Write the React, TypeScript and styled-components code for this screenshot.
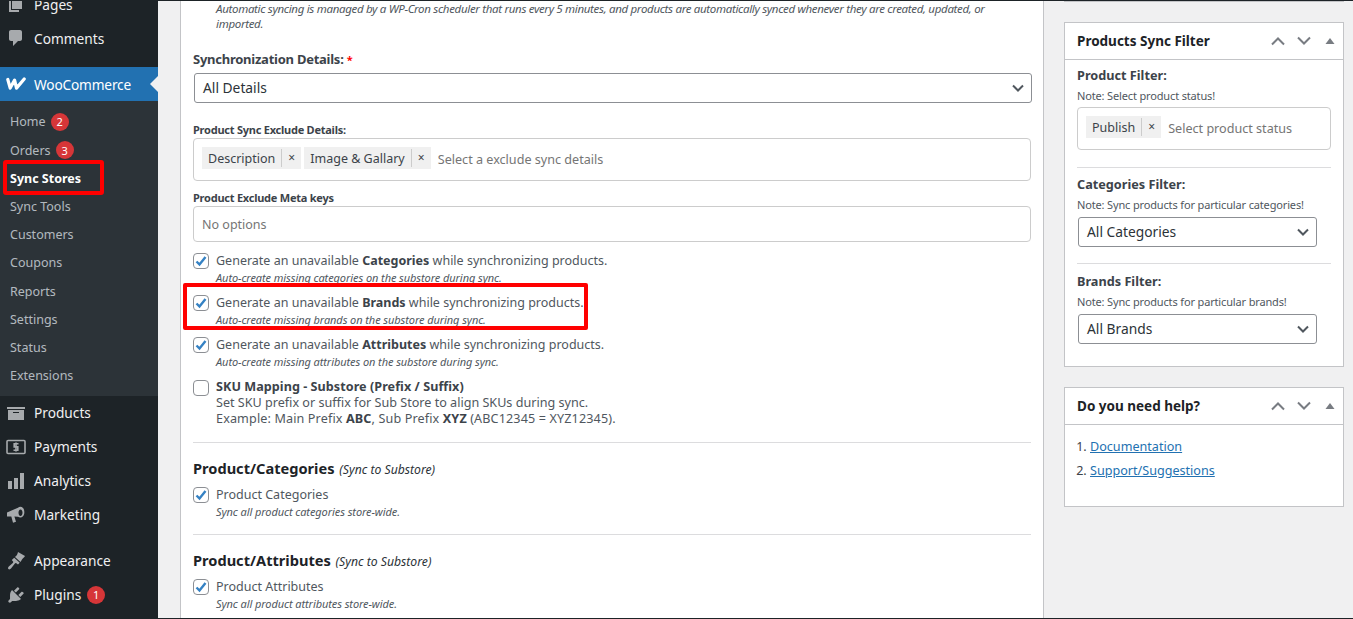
import React from "react";
import styled, { createGlobalStyle } from "styled-components";

const FONT = `"Noto Sans", "Open Sans", sans-serif`;

const Global = createGlobalStyle`
  html, body { margin: 0; padding: 0; background: #f0f0f1; overflow: hidden; }
  *, *::before, *::after { box-sizing: border-box; }
  body { font-family: ${FONT}; font-size: 13px; color: #3c434a; }
`;

const Frame = styled.div`
  display: flex;
  height: 619px;
  border-top: 1px solid #1d2327;
  border-bottom: 1px solid #1d2327;
  overflow: hidden;
`;

const Sidebar = styled.nav`
  width: 158px;
  flex: none;
  background: #1d2327;
  overflow: hidden;
`;
const SideList = styled.div`
  margin-top: -14px;
  display: flex;
  flex-direction: column;
`;
const MenuRow = styled.div<{ $active?: boolean; $gapAfter?: number }>`
  position: relative;
  height: 34px;
  flex: none;
  display: flex;
  align-items: center;
  gap: 8px;
  padding-left: 6px;
  font-size: 13.7px;
  letter-spacing: ${(p) => (p.$active ? "-0.17px" : "0")};
  color: ${(p) => (p.$active ? "#fff" : "#f0f0f1")};
  background: ${(p) => (p.$active ? "#2271b1" : "transparent")};
  margin-bottom: ${(p) => p.$gapAfter ?? 0}px;
  svg { flex: none; color: ${(p) => (p.$active ? "#fff" : "#a7aaad")}; }
`;
const ActiveArrow = styled.span`
  position: absolute;
  right: 0;
  top: 9px;
  border: 8px solid transparent;
  border-right-color: #f0f0f1;
  border-left-width: 0;
`;
const SubMenu = styled.div`
  background: #2c3338;
  padding: 6.9px 0 6.1px;
  display: flex;
  flex-direction: column;
`;
const SubRow = styled.div<{ $current?: boolean }>`
  position: relative;
  height: 28.2px;
  display: flex;
  align-items: center;
  gap: 5px;
  padding-left: 10px;
  font-size: 12.5px;
  font-weight: ${(p) => (p.$current ? 700 : 400)};
  color: ${(p) => (p.$current ? "#fff" : "rgba(240,246,252,.7)")};
`;
const Badge = styled.span<{ $shift?: number }>`
  width: 18px;
  height: 18px;
  margin-left: ${(p) => p.$shift ?? 0}px;
  border-radius: 50%;
  background: #d63638;
  color: #fff;
  font-size: 11px;
  display: inline-flex;
  align-items: center;
  justify-content: center;
`;
const SyncHighlight = styled.span`
  position: absolute;
  left: 3px;
  top: -4px;
  width: 101px;
  height: 35px;
  border: 4px solid #f00;
  border-radius: 3px;
`;
const BrandHighlight = styled.span`
  position: absolute;
  left: -10px;
  top: -11px;
  width: 405px;
  height: 47px;
  border: 4px solid #f00;
  border-radius: 2px;
  pointer-events: none;
`;

const Content = styled.main`
  flex: 1;
  min-width: 0;
  display: flex;
  gap: 20px;
  padding-left: 22px;
  align-items: stretch;
`;
const Card = styled.section`
  width: 864px;
  flex: none;
  background: #fff;
  border-left: 1px solid #c3c4c7;
  border-right: 1px solid #c3c4c7;
  padding: 0 12px;
  overflow: hidden;
`;
const Description = styled.p`
  margin: 0;
  padding-left: 23px;
  font-size: 11.5px;
  letter-spacing: -0.32px;
  line-height: 15px;
  font-style: italic;
  color: #50575e;
  white-space: nowrap;
`;
const FieldTitle = styled.div`
  margin-top: 18px;
  height: 20px;
  font-size: 13px;
  letter-spacing: -0.25px;
  line-height: 20px;
  font-weight: 700;
  color: #3c434a;
`;
const Required = styled.span`
  color: #f00;
  font-size: 11px;
`;
const SmallLabel = styled.div<{ $top: number }>`
  margin-top: ${(p) => p.$top}px;
  font-size: 11px;
  letter-spacing: -0.24px;
  line-height: 16px;
  font-weight: 700;
  color: #3c434a;
`;
const SelectBox = styled.div<{ $w: string; $top: number; $left?: number }>`
  width: ${(p) => p.$w};
  height: 30px;
  margin-top: ${(p) => p.$top}px;
  margin-left: ${(p) => p.$left ?? 0}px;
  border: 1px solid #8c8f94;
  border-radius: 3px;
  background: #fff;
  display: flex;
  align-items: center;
  justify-content: space-between;
  padding: 0 7px 2px 8px;
  font-size: 13.8px;
  color: #2c3338;
  svg { margin-top: 2px; }
`;
const Multi = styled.div<{ $w?: string; $h?: number; $top?: number }>`
  width: ${(p) => p.$w ?? "100%"};
  height: ${(p) => p.$h ?? 43}px;
  margin-top: ${(p) => p.$top ?? 0}px;
  border: 1px solid #ccc;
  border-radius: 4px;
  display: flex;
  align-items: center;
  gap: 3px;
  padding: 0 8px;
`;
const Chip = styled.span`
  height: 22px;
  background: #f0f0f0;
  display: inline-flex;
  align-items: center;
  padding-left: 6px;
  color: #3c434a;
  font-size: 12.5px;
  margin-top: -3px;
`;
const ChipX = styled.span`
  margin-left: 6px;
  width: 20px;
  height: 18px;
  border-left: 1px solid #ccc;
  font-size: 12px;
  line-height: 18px;
  text-align: center;
`;
const Placeholder = styled.span<{ $lift?: number }>`
  margin: ${(p) => p.$lift ?? 0}px 0 0 4px;
  color: #757575;
  font-size: 12.6px;
`;
const NoOptions = styled.span`
  color: #757575;
  font-size: 12.5px;
`;
const CheckRow = styled.div<{ $top: number }>`
  position: relative;
  display: flex;
  gap: 7px;
  margin-top: ${(p) => p.$top}px;
`;
const CheckBox = styled.span`
  width: 16px;
  height: 16px;
  margin-top: 1px;
  flex: none;
  border: 1px solid #8c8f94;
  border-radius: 4px;
  background: #fff;
  display: flex;
  align-items: center;
  justify-content: center;
`;
const CheckText = styled.div`
  font-size: 12.5px;
  line-height: 17px;
  color: #50575e;
  b { color: #3c434a; }
`;
const CheckSub = styled.div`
  font-size: 11px;
  letter-spacing: -0.08px;
  line-height: 17px;
  font-style: italic;
  color: #50575e;
`;
const SkuText = styled.div<{ $spread?: number }>`
  font-size: 12.6px;
  letter-spacing: ${(p) => p.$spread ?? 0}px;
  line-height: 16px;
  color: #50575e;
  b { color: #3c434a; }
`;
const Rule = styled.hr<{ $top: number }>`
  border: 0;
  height: 1px;
  margin: ${(p) => p.$top}px 0 0;
  background: #dcdcde;
`;
const Heading = styled.h3`
  margin: 15px 0 0;
  font-size: 14.6px;
  line-height: 20px;
  font-weight: 700;
  color: #1d2327;
  em { font-size: 12.2px; font-weight: 400; margin-left: 1px; color: #2c3338; }
`;

const SideCol = styled.aside`
  width: 280px;
  flex: none;
  display: flex;
  flex-direction: column;
`;
const PrevEdge = styled.div`
  height: 1px;
  background: #c3c4c7;
  margin-bottom: 20px;
`;
const Box = styled.div`
  border: 1px solid #c3c4c7;
  background: #fff;
  margin-bottom: 20px;
`;
const BoxHead = styled.div`
  height: 37px;
  border-bottom: 1px solid #c3c4c7;
  display: flex;
  align-items: center;
  padding-left: 12px;
`;
const BoxTitle = styled.h2`
  margin: 0 0 1px;
  flex: 1;
  font-size: 13.5px;
  font-weight: 700;
  color: #1d2327;
`;
const HeadBtn = styled.span`
  width: 26px;
  height: 36px;
  display: flex;
  align-items: center;
  justify-content: center;
  color: #787c82;
`;
const BoxBody = styled.div<{ $bottom: number; $top: number }>`
  padding: ${(p) => p.$top}px 12px ${(p) => p.$bottom}px;
`;
const FilterTitle = styled.div<{ $top?: number }>`
  margin-top: ${(p) => p.$top ?? 0}px;
  font-size: 12.7px;
  line-height: 18px;
  font-weight: 700;
  color: #3c434a;
`;
const Note = styled.div`
  margin-top: 4px;
  font-size: 11px;
  letter-spacing: -0.15px;
  line-height: 16px;
  color: #50575e;
`;
const HelpList = styled.ol`
  margin: 0;
  padding: 0 0 0 13px;
  font-size: 12.6px;
  li { height: 24px; line-height: 24px; }
  a { color: #2271b1; text-decoration: underline; }
`;

const Chevron = () => (
  <svg width="12" height="8" viewBox="0 0 12 8" fill="none" stroke="#50575e" strokeWidth="2">
    <path d="M1 1.5l5 5 5-5" />
  </svg>
);
const HeadUp = () => (
  <svg width="16" height="10" viewBox="0 0 16 10" fill="none" stroke="currentColor" strokeWidth="2">
    <path d="M2 8.5l6-6 6 6" />
  </svg>
);
const HeadDown = () => (
  <svg width="16" height="10" viewBox="0 0 16 10" fill="none" stroke="currentColor" strokeWidth="2">
    <path d="M2 1.5l6 6 6-6" />
  </svg>
);
const HeadTri = () => (
  <svg width="10" height="6" viewBox="0 0 10 6" fill="currentColor">
    <path d="M5 0l4.5 6h-9z" />
  </svg>
);
const Tick = () => (
  <svg width="14" height="14" viewBox="0 0 14 14" fill="none" stroke="#3582c4" strokeWidth="2.4">
    <path d="M2.5 7.5l3 3 6-7.5" />
  </svg>
);

const Ico = ({ d }: { d: string }) => (
  <svg width="20" height="20" viewBox="0 0 20 20" fill="currentColor">
    <path d={d} />
  </svg>
);
const PAGES = "M6 15V2h10v13H6zm-1 1h8v2H3V5h2v11z";
const COMMENTS = "M5 2h9c1.1 0 2 .9 2 2v7c0 1.1-.9 2-2 2h-2l-5 5v-5H5c-1.1 0-2-.9-2-2V4c0-1.1.9-2 2-2z";
const ARCHIVE = "M19 4v2H1V4h18zM2 7h16v10H2V7zm11 3V9H7v1h6z";
const BARS = "M18 18V2h-4v16h4zm-6 0V7H8v11h4zm-6 0v-8H2v8h4z";
const PLUG = "M13.11 4.36L9.87 7.6 8 5.73l3.24-3.24c.35-.34 1.05-.2 1.56.32.52.51.66 1.21.31 1.55zm-8 1.77l.91-1.12 9.01 9.01-1.19.84c-.71.71-2.63 1.16-3.82 1.16H6.14L4.9 17.26c-.59.59-1.54.59-2.12 0-.59-.58-.59-1.53 0-2.12l1.24-1.24v-3.88c0-1.13.4-3.19 1.09-3.89zm7.26 3.97l3.24-3.24c.34-.35 1.04-.21 1.55.31.52.51.66 1.21.31 1.55l-3.24 3.25z";
const BRUSH = "M12 1l7 4c-.8 1.5-2 2-3 3.5L14.5 11 9 6l2-2c.5-1 .7-2 1-3zM8.2 6.8l5.5 5-1.7 1.7-1.7-1.2c-.5-.4-1-.2-1.4.3L5 17.6c-.7.8-1.8 1.2-2.6.5-.7-.7-.4-1.7.4-2.5l4-3.6c.5-.4.6-1 .2-1.4L5.8 9z";

const PaymentsIcon = () => (
  <svg width="20" height="20" viewBox="0 0 20 20" fill="none" stroke="currentColor">
    <rect x="1" y="3.5" width="18" height="13" strokeWidth="1.6" rx="1" />
    <path d="M12.5 6.8H8.2v3.1h3.6v3.3H7.5M10 5.4v9.2" strokeWidth="1.6" />
  </svg>
);
const MegaphoneIcon = () => (
  <svg width="20" height="20" viewBox="0 0 20 20" fill="currentColor">
    <path fillRule="evenodd" d="M1 7.5l11-4.8c1.6-1.3 3.7-1.1 5 .4 1.8 2 1.8 6.2 0 8.2-1.4 1.5-3.4 1.5-5 .5l-3.6-.4 1.6 5.4-3 1-1.7-6.4-4.3.1zM14.5 4.5c-1.2 0-2 1.4-2 3.2s.8 3.2 2 3.2 2-1.4 2-3.2-.8-3.2-2-3.2z" />
  </svg>
);
const WooLogo = () => (
  <svg width="20" height="20" viewBox="0 0 20 20" fill="none" stroke="currentColor" strokeWidth="3.2" strokeLinejoin="round" strokeLinecap="round">
    <path d="M1.8 5.5l2.4 8.6 4.4-8 1.9 8 7.7-9.1" />
  </svg>
);

const subItems = ["Sync Tools", "Customers", "Coupons", "Reports", "Settings", "Status", "Extensions"];

function Row({ title, sub, top, hl }: { title: React.ReactNode; sub: string; top: number; hl?: boolean }) {
  return (
    <CheckRow $top={top}>
      {hl && <BrandHighlight />}
      <CheckBox><Tick /></CheckBox>
      <div>
        <CheckText>{title}</CheckText>
        <CheckSub>{sub}</CheckSub>
      </div>
    </CheckRow>
  );
}

function BoxHeader({ title }: { title: string }) {
  return (
    <BoxHead>
      <BoxTitle>{title}</BoxTitle>
      <HeadBtn><HeadUp /></HeadBtn>
      <HeadBtn><HeadDown /></HeadBtn>
      <HeadBtn><HeadTri /></HeadBtn>
    </BoxHead>
  );
}

export default function App() {
  return (
    <>
      <Global />
      <Frame>
        <Sidebar>
          <SideList>
            <MenuRow><Ico d={PAGES} />Pages</MenuRow>
            <MenuRow $gapAfter={12}><Ico d={COMMENTS} />Comments</MenuRow>
            <MenuRow $active><WooLogo />WooCommerce<ActiveArrow /></MenuRow>
            <SubMenu>
              <SubRow>Home <Badge>2</Badge></SubRow>
              <SubRow>Orders <Badge>3</Badge></SubRow>
              <SubRow $current>Sync Stores<SyncHighlight /></SubRow>
              {subItems.map((s) => <SubRow key={s}>{s}</SubRow>)}
            </SubMenu>
            <MenuRow><Ico d={ARCHIVE} />Products</MenuRow>
            <MenuRow><PaymentsIcon />Payments</MenuRow>
            <MenuRow><Ico d={BARS} />Analytics</MenuRow>
            <MenuRow $gapAfter={12}><MegaphoneIcon />Marketing</MenuRow>
            <MenuRow><Ico d={BRUSH} />Appearance</MenuRow>
            <MenuRow><Ico d={PLUG} />Plugins <Badge $shift={-2}>1</Badge></MenuRow>
          </SideList>
        </Sidebar>
        <Content>
          <Card>
            <Description>
              Automatic syncing is managed by a WP-Cron scheduler that runs every 5 minutes, and products are automatically synced whenever they are created, updated, or
              <br />imported.
            </Description>
            <FieldTitle>Synchronization Details: <Required>*</Required></FieldTitle>
            <SelectBox $w="838px" $top={4} $left={1}>All Details<Chevron /></SelectBox>
            <SmallLabel $top={19}>Product Sync Exclude Details:</SmallLabel>
            <Multi>
              <Chip>Description<ChipX>×</ChipX></Chip>
              <Chip>Image &amp; Gallary<ChipX>×</ChipX></Chip>
              <Placeholder $lift={-1}>Select a exclude sync details</Placeholder>
            </Multi>
            <SmallLabel $top={9}>Product Exclude Meta keys</SmallLabel>
            <Multi $h={36}><NoOptions>No options</NoOptions></Multi>
            <Row top={10} title={<>Generate an unavailable <b>Categories</b> while synchronizing products.</>} sub="Auto-create missing categories on the substore during sync." />
            <Row top={8} hl title={<>Generate an unavailable <b>Brands</b> while synchronizing products.</>} sub="Auto-create missing brands on the substore during sync." />
            <Row top={8} title={<>Generate an unavailable <b>Attributes</b> while synchronizing products.</>} sub="Auto-create missing attributes on the substore during sync." />
            <CheckRow $top={9}>
              <CheckBox />
              <div>
                <SkuText $spread={0.05}><b>SKU Mapping - Substore (Prefix / Suffix)</b></SkuText>
                <SkuText>Set SKU prefix or suffix for Sub Store to align SKUs during sync.</SkuText>
                <SkuText $spread={0.13}>Example: Main Prefix <b>ABC</b>, Sub Prefix <b>XYZ</b> (ABC12345 = XYZ12345).</SkuText>
              </div>
            </CheckRow>
            <Rule $top={15} />
            <Heading>Product/Categories <em>(Sync to Substore)</em></Heading>
            <Row top={6} title="Product Categories" sub="Sync all product categories store-wide." />
            <Rule $top={14} />
            <Heading>Product/Attributes <em>(Sync to Substore)</em></Heading>
            <Row top={6} title="Product Attributes" sub="Sync all product attributes store-wide." />
          </Card>
          <SideCol>
            <PrevEdge />
            <Box>
              <BoxHeader title="Products Sync Filter" />
              <BoxBody $top={6} $bottom={22}>
                <FilterTitle>Product Filter:</FilterTitle>
                <Note>Note: Select product status!</Note>
                <Multi $w="254px" $top={3}>
                  <Chip>Publish<ChipX>×</ChipX></Chip>
                  <Placeholder>Select product status</Placeholder>
                </Multi>
                <Rule $top={17} />
                <FilterTitle $top={7}>Categories Filter:</FilterTitle>
                <Note>Note: Sync products for particular categories!</Note>
                <SelectBox $w="239px" $top={4} $left={1}>All Categories<Chevron /></SelectBox>
                <Rule $top={16} />
                <FilterTitle $top={8}>Brands Filter:</FilterTitle>
                <Note>Note: Sync products for particular brands!</Note>
                <SelectBox $w="239px" $top={4} $left={1}>All Brands<Chevron /></SelectBox>
              </BoxBody>
            </Box>
            <Box>
              <BoxHeader title="Do you need help?" />
              <BoxBody $top={10} $bottom={23}>
                <HelpList>
                  <li><a href="#docs">Documentation</a></li>
                  <li><a href="#support">Support/Suggestions</a></li>
                </HelpList>
              </BoxBody>
            </Box>
          </SideCol>
        </Content>
      </Frame>
    </>
  );
}
